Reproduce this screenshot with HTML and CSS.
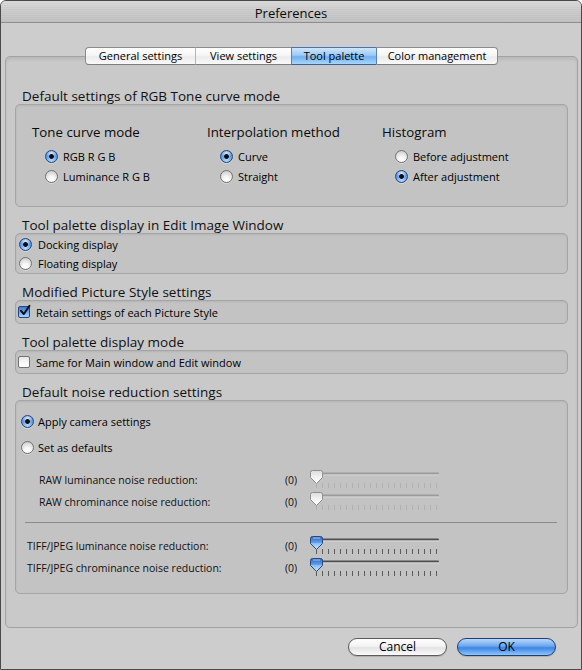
FILE: index.html
```html
<!DOCTYPE html>
<html>
<head>
<meta charset="utf-8">
<title>Preferences</title>
<link rel="stylesheet" href="styles.css">
</head>
<body>
<svg class="defs" width="0" height="0" aria-hidden="true">
  <defs>
    <linearGradient id="thumbBlue" x1="0" y1="0" x2="0" y2="1">
      <stop offset="0" stop-color="#2f66c4"/>
      <stop offset="0.45" stop-color="#5e9be6"/>
      <stop offset="0.55" stop-color="#8fc3f7"/>
      <stop offset="1" stop-color="#c9e4fb"/>
    </linearGradient>
    <linearGradient id="thumbGrey" x1="0" y1="0" x2="0" y2="1">
      <stop offset="0" stop-color="#dcdcdc"/>
      <stop offset="0.5" stop-color="#f2f2f2"/>
      <stop offset="1" stop-color="#ffffff"/>
    </linearGradient>
    <symbol id="ticks" viewBox="0 0 132 22">
      <path d="M6.5 14v5M12.5 14v5M18.5 14v5M24.5 14v5M30.5 14v5M36.5 14v5M42.5 14v5M48.5 14v5M54.5 14v5M60.5 14v5M66.5 14v5M72.5 14v5M78.5 14v5M84.5 14v5M90.5 14v5M96.5 14v5M102.5 14v5M108.5 14v5M114.5 14v5M120.5 14v5M126.5 14v5" stroke-width="1"/>
    </symbol>
  </defs>
</svg>

<div class="window">
  <div class="titlebar">Preferences</div>

  <div class="tabbox">
    <div class="tabs">
      <div class="tab tab-general">General settings</div>
      <div class="tab tab-view">View settings</div>
      <div class="tab tab-tool tab-active">Tool palette</div>
      <div class="tab tab-color">Color management</div>
    </div>

    <section class="group group-first">
      <div class="group-title">Default settings of RGB Tone curve mode</div>
      <div class="group-box box-tone">
        <div class="col">
          <div class="col-head">Tone curve mode</div>
          <div class="opt"><span class="radio radio-on"></span>RGB R G B</div>
          <div class="opt"><span class="radio"></span>Luminance R G B</div>
        </div>
        <div class="col">
          <div class="col-head">Interpolation method</div>
          <div class="opt"><span class="radio radio-on"></span>Curve</div>
          <div class="opt"><span class="radio"></span>Straight</div>
        </div>
        <div class="col">
          <div class="col-head">Histogram</div>
          <div class="opt"><span class="radio"></span>Before adjustment</div>
          <div class="opt"><span class="radio radio-on"></span>After adjustment</div>
        </div>
      </div>
    </section>

    <section class="group">
      <div class="group-title">Tool palette display in Edit Image Window</div>
      <div class="group-box box-dock">
        <div class="opt opt-dock"><span class="radio radio-on"></span>Docking display</div>
        <div class="opt opt-dock"><span class="radio"></span>Floating display</div>
      </div>
    </section>

    <section class="group">
      <div class="group-title">Modified Picture Style settings</div>
      <div class="group-box box-check">
        <div class="opt opt-check">
          <span class="check check-on">
            <svg width="14" height="14" viewBox="0 0 14 14"><path d="M3 6.8 L5.8 10 L11.5 1.8" fill="none" stroke="#101010" stroke-width="2" stroke-linecap="round" stroke-linejoin="round"/></svg>
          </span>Retain settings of each Picture Style
        </div>
      </div>
    </section>

    <section class="group">
      <div class="group-title">Tool palette display mode</div>
      <div class="group-box box-check">
        <div class="opt opt-check"><span class="check"></span>Same for Main window and Edit window</div>
      </div>
    </section>

    <section class="group">
      <div class="group-title">Default noise reduction settings</div>
      <div class="group-box box-noise">
        <div class="opt opt-noise"><span class="radio radio-on"></span>Apply camera settings</div>
        <div class="opt opt-noise opt-noise-2"><span class="radio"></span>Set as defaults</div>

        <div class="nr-rows">
          <div class="nr-row">
            <span class="nr-label nr-raw">RAW luminance noise reduction:</span>
            <span class="nr-val">(0)</span>
            <svg class="slider slider-off" width="132" height="22" viewBox="0 0 132 22">
              <rect x="4" y="3.5" width="125" height="2" rx="1" fill="#9b9b9b"/>
              <rect x="4" y="5.5" width="125" height="1" fill="#d6d6d6"/>
              <use href="#ticks" stroke="#b1b1b1"/>
              <path d="M2.5 1.5 h8 a2 2 0 0 1 2 2 v5 l-6 6 l-6 -6 v-5 a2 2 0 0 1 2 -2 z" fill="url(#thumbGrey)" stroke="#8e8e8e"/>
            </svg>
          </div>
          <div class="nr-row">
            <span class="nr-label nr-raw">RAW chrominance noise reduction:</span>
            <span class="nr-val">(0)</span>
            <svg class="slider slider-off" width="132" height="22" viewBox="0 0 132 22">
              <rect x="4" y="3.5" width="125" height="2" rx="1" fill="#9b9b9b"/>
              <rect x="4" y="5.5" width="125" height="1" fill="#d6d6d6"/>
              <use href="#ticks" stroke="#b1b1b1"/>
              <path d="M2.5 1.5 h8 a2 2 0 0 1 2 2 v5 l-6 6 l-6 -6 v-5 a2 2 0 0 1 2 -2 z" fill="url(#thumbGrey)" stroke="#8e8e8e"/>
            </svg>
          </div>
        </div>

        <div class="separator"></div>

        <div class="nr-rows">
          <div class="nr-row">
            <span class="nr-label nr-tiff">TIFF/JPEG luminance noise reduction:</span>
            <span class="nr-val">(0)</span>
            <svg class="slider" width="132" height="22" viewBox="0 0 132 22">
              <rect x="4" y="3.5" width="125" height="2" rx="1" fill="#4f4f4f"/>
              <rect x="4" y="5.5" width="125" height="1" fill="#d9d9d9"/>
              <use href="#ticks" stroke="#5b5b5b"/>
              <path d="M2.5 1.5 h8 a2 2 0 0 1 2 2 v5 l-6 6 l-6 -6 v-5 a2 2 0 0 1 2 -2 z" fill="url(#thumbBlue)" stroke="#29487c"/>
              <path d="M3 3 h7" stroke="#cfe6fb" stroke-width="1" opacity="0.7"/>
            </svg>
          </div>
          <div class="nr-row">
            <span class="nr-label nr-tiff">TIFF/JPEG chrominance noise reduction:</span>
            <span class="nr-val">(0)</span>
            <svg class="slider" width="132" height="22" viewBox="0 0 132 22">
              <rect x="4" y="3.5" width="125" height="2" rx="1" fill="#4f4f4f"/>
              <rect x="4" y="5.5" width="125" height="1" fill="#d9d9d9"/>
              <use href="#ticks" stroke="#5b5b5b"/>
              <path d="M2.5 1.5 h8 a2 2 0 0 1 2 2 v5 l-6 6 l-6 -6 v-5 a2 2 0 0 1 2 -2 z" fill="url(#thumbBlue)" stroke="#29487c"/>
              <path d="M3 3 h7" stroke="#cfe6fb" stroke-width="1" opacity="0.7"/>
            </svg>
          </div>
        </div>
      </div>
    </section>
  </div>

  <div class="buttons">
    <div class="btn">Cancel</div>
    <div class="btn btn-default">OK</div>
  </div>
</div>
</body>
</html>
```

FILE: styles.css
```css
html, body {
  margin: 0;
  padding: 0;
  background: #ffffff;
}

body {
  font-family: "Open Sans", "DejaVu Sans", sans-serif;
  color: #000000;
}

.defs {
  display: block;
  width: 0;
  height: 0;
  overflow: hidden;
}

.window {
  width: 582px;
  height: 670px;
  box-sizing: border-box;
  border: 1px solid #4a4a4a;
  border-radius: 6px 6px 0 0;
  background: #cdcdcd;
  display: flex;
  flex-direction: column;
  overflow: hidden;
}

.titlebar {
  height: 22px;
  box-sizing: border-box;
  padding-top: 2px;
  line-height: 20px;
  text-align: center;
  font-size: 13px;
  color: #0a0a0a;
  border-bottom: 1px solid #8f8f8f;
  background:
    repeating-linear-gradient(180deg, rgba(0,0,0,0.035) 0 1px, rgba(0,0,0,0) 1px 2px),
    linear-gradient(180deg, #dedede 0%, #cfcfcf 40%, #c4c4c4 100%);
  flex: none;
}

.tabbox {
  margin: 33px 3px 0 4px;
  border: 1px solid #a2a2a2;
  border-radius: 5px;
  background: #c9c9c9;
  box-shadow: inset 0 3px 3px rgba(0,0,0,0.07);
  padding: 0 9px 33px 9px;
  flex: none;
}

.tabs {
  display: flex;
  justify-content: center;
  margin-top: -10px;
  height: 18px;
}

.tab {
  box-sizing: border-box;
  height: 18px;
  line-height: 16px;
  font-size: 11px;
  text-align: center;
  border-top: 1px solid #8c8c8c;
  border-bottom: 1px solid #7e7e7e;
  border-left: 1px solid #b4b4b4;
  background: linear-gradient(180deg, #ffffff 0%, #f6f6f6 45%, #ebebeb 55%, #f9f9f9 100%);
  color: #000000;
}

.tab-general {
  width: 110px;
  border-left: 1px solid #8c8c8c;
  border-radius: 4px 0 0 4px;
}

.tab-view {
  width: 96px;
}

.tab-tool {
  width: 85px;
}

.tab-color {
  width: 122px;
  border-right: 1px solid #8c8c8c;
  border-radius: 0 4px 4px 0;
}

.tab-active {
  border-left-color: #5a7fb3;
  border-top-color: #4d71a8;
  border-bottom-color: #3e5f92;
  background: linear-gradient(180deg, #cfe6fc 0%, #9ccaf5 45%, #6fb0f0 55%, #a9d6fb 100%);
}

.tab-active + .tab {
  border-left-color: #5a7fb3;
}

.group {
  margin-top: 10px;
}

.group-first {
  margin-top: 23px;
}

.group-title {
  font-size: 13.5px;
  line-height: 16px;
  padding-left: 7px;
  color: #111111;
}

.group-box {
  border: 1px solid #a5a5a5;
  border-radius: 5px;
  background: #c3c3c3;
  box-shadow: inset 0 1px 2px rgba(0,0,0,0.08);
}

.box-tone {
  display: grid;
  grid-template-columns: 175px 175px 175px;
  padding: 19px 0 20px 16px;
}

.col-head {
  font-size: 13.3px;
  line-height: 16px;
  margin-bottom: 6px;
  color: #0a0a0a;
}

.opt {
  display: flex;
  align-items: center;
  gap: 5px;
  height: 20px;
  font-size: 11px;
  color: #000000;
}

.col .opt {
  margin-left: 13px;
}

.box-dock {
  padding: 1px 0 0 3px;
}

.opt-dock {
  height: 19px;
  gap: 6px;
}

.box-check {
  padding-left: 2px;
}

.opt-check {
  height: 22px;
  gap: 6px;
}

.radio {
  flex: none;
  width: 13px;
  height: 13px;
  box-sizing: border-box;
  border-radius: 50%;
  border: 1px solid #727272;
  background:
    radial-gradient(circle at 50% 78%, #ffffff 0, #f7f7f7 30%, #d9d9d9 70%, #bdbdbd 100%);
  box-shadow: 0 1px 0 rgba(255,255,255,0.35);
}

.radio-on {
  border-color: #23457d;
  background:
    radial-gradient(circle at 50% 50%, #0c0c0c 0 2px, rgba(0,0,0,0) 2.7px),
    radial-gradient(ellipse 60% 40% at 50% 18%, rgba(255,255,255,0.8) 0, rgba(255,255,255,0) 100%),
    radial-gradient(circle at 50% 85%, #b5dcfd 0, #69a6ec 45%, #2c66c2 100%);
}

.check {
  flex: none;
  position: relative;
  width: 12px;
  height: 12px;
  box-sizing: border-box;
  border: 1px solid #727272;
  border-radius: 2px;
  background: linear-gradient(180deg, #e6e6e6 0%, #f6f6f6 50%, #ffffff 100%);
}

.check-on {
  border-color: #23457d;
  background: linear-gradient(180deg, #3f7ad6 0%, #6aa6ec 50%, #a8d3fb 100%);
}

.check svg {
  position: absolute;
  left: -1px;
  top: -3px;
}

.box-noise {
  padding: 10px 0 14px 0;
}

.opt-noise {
  padding-left: 5px;
  gap: 4px;
}

.opt-noise-2 {
  margin-top: 6px;
}

.nr-rows {
  margin-top: 12px;
}

.nr-row {
  display: grid;
  grid-template-columns: 269px 25px 132px;
  height: 22px;
  align-items: center;
  font-size: 10.5px;
  color: #111111;
}

.nr-label {
  line-height: 22px;
  white-space: nowrap;
}

.nr-raw {
  padding-left: 23px;
}

.nr-tiff {
  padding-left: 11px;
}

.nr-val {
  line-height: 22px;
}

.slider {
  display: block;
}

.separator {
  height: 1px;
  background: #8a8a8a;
  margin: 9px 10px 0 9px;
}

.separator + .nr-rows {
  margin-top: 12px;
}

.buttons {
  display: flex;
  justify-content: flex-end;
  gap: 10px;
  padding-right: 25px;
  margin-top: 10px;
  flex: none;
}

.btn {
  width: 99px;
  height: 18px;
  box-sizing: border-box;
  border: 1px solid #5c5c5c;
  border-radius: 9px;
  text-align: center;
  font-size: 12px;
  line-height: 16px;
  color: #000000;
  background: linear-gradient(180deg, #ffffff 0%, #f3f3f3 45%, #e3e3e3 55%, #fbfbfb 100%);
  box-shadow: 0 1px 1px rgba(0,0,0,0.15);
}

.btn-default {
  border-color: #1f3e76;
  background: linear-gradient(180deg, #b7d8fa 0%, #6aa6ee 45%, #3d84e4 55%, #8ec6fa 100%);
}
```
